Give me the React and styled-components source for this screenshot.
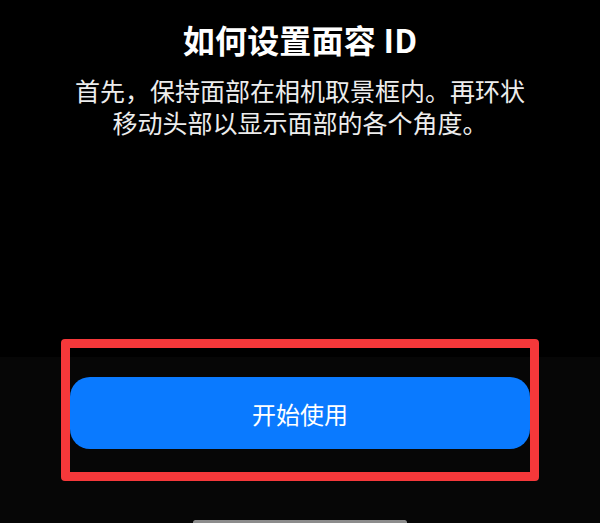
import React from "react";
import styled, { createGlobalStyle } from "styled-components";

const GlobalStyle = createGlobalStyle`
  html, body {
    margin: 0;
    padding: 0;
    background: #000;
    overflow: hidden;
  }
  * {
    box-sizing: border-box;
  }
`;

const Screen = styled.div`
  width: 600px;
  height: 523px;
  overflow: hidden;
  display: flex;
  flex-direction: column;
  align-items: center;
  background: linear-gradient(#000 0 357px, #060606 357px);
  font-family: "Noto Sans CJK SC", "Noto Sans", sans-serif;
  color: #fff;
`;

const Header = styled.div`
  padding-top: 19px;
  display: flex;
  flex-direction: column;
  align-items: center;
`;

const Title = styled.h1`
  margin: 0;
  font-size: 32px;
  line-height: 40px;
  font-weight: 700;
  letter-spacing: 0.2px;
`;

const Description = styled.p`
  margin: 15px 0 0;
  max-width: 456px;
  font-size: 25px;
  line-height: 32px;
  font-weight: 400;
  text-align: center;
  color: #ededed;
`;

const Footer = styled.div`
  margin-top: 201px;
  display: flex;
  flex-direction: column;
  align-items: center;
`;

const Highlight = styled.div`
  width: 478px;
  border: 9.5px solid #f5383a;
  border-radius: 4px;
  padding: 29px 0 23px;
`;

const StartButton = styled.button`
  display: flex;
  align-items: center;
  justify-content: center;
  width: 100%;
  height: 72px;
  border: none;
  border-radius: 20px;
  background: #0a7aff;
  color: #fff;
  font-family: inherit;
  font-size: 24px;
  font-weight: 400;
  cursor: pointer;
`;

const HomeIndicator = styled.div`
  margin-top: 39px;
  width: 214px;
  height: 5px;
  border-radius: 3px;
  background: #8c8c8c;
`;

export default function App() {
  return (
    <>
      <GlobalStyle />
      <Screen>
        <Header>
          <Title>如何设置面容 ID</Title>
          <Description>
            首先，保持面部在相机取景框内。再环状移动头部以显示面部的各个角度。
          </Description>
        </Header>
        <Footer>
          <Highlight>
            <StartButton>开始使用</StartButton>
          </Highlight>
          <HomeIndicator />
        </Footer>
      </Screen>
    </>
  );
}
